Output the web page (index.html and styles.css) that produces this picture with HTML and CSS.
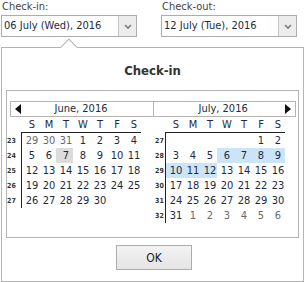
FILE: index.html
```html
<!DOCTYPE html>
<html lang="en">
<head>
    <meta charset="UTF-8">
    <title>Booking dates</title>
    <link rel="stylesheet" href="styles.css">
</head>
<body>
    <div class="fields">
        <div class="field">
            <div class="label">Check-in:</div>
            <div class="select">
                <span class="value">06 July (Wed), 2016</span>
                <span class="drop">
                    <svg width="8" height="5" viewBox="0 0 8 5"><path d="M1 1 L4 4 L7 1" fill="none" stroke="#7a7a7a" stroke-width="1.6"/></svg>
                </span>
            </div>
        </div>
        <div class="field">
            <div class="label">Check-out:</div>
            <div class="select">
                <span class="value">12 July (Tue), 2016</span>
                <span class="drop">
                    <svg width="8" height="5" viewBox="0 0 8 5"><path d="M1 1 L4 4 L7 1" fill="none" stroke="#7a7a7a" stroke-width="1.6"/></svg>
                </span>
            </div>
        </div>
    </div>

    <div class="popup">
        <span class="notch"></span>
        <div class="title">Check-in</div>

        <div class="cal-box">
            <div class="cal-head">
                <div class="head-half">
                    <svg class="arrow prev" width="6" height="10" viewBox="0 0 6 10"><path d="M6 0 L0 5 L6 10 Z" fill="#111"/></svg>
                    June, 2016
                </div>
                <div class="head-half">
                    July, 2016
                    <svg class="arrow next" width="6" height="10" viewBox="0 0 6 10"><path d="M0 0 L6 5 L0 10 Z" fill="#111"/></svg>
                </div>
            </div>
            <div class="months">
                <div class="month" id="june"></div>
                <div class="month next-month" id="july"></div>
            </div>
        </div>

        <div class="actions">
            <button class="ok-btn">OK</button>
        </div>
    </div>

    <script>
        // weeks of each month: [week number, days...]; 'p' = other month, 'h' = today, 's' = selected
        const june = [
            [23, ['29','p'], ['30','p'], ['31','p'], '1', '2', '3', '4'],
            [24, '5', '6', ['7','h'], '8', '9', '10', '11'],
            [25, '12', '13', '14', '15', '16', '17', '18'],
            [26, '19', '20', '21', '22', '23', '24', '25'],
            [27, '26', '27', '28', '29', '30', '', '']
        ];
        const july = [
            [27, '', '', '', '', '', '1', '2'],
            [28, '3', '4', '5', ['6','s'], ['7','s'], ['8','s'], ['9','s']],
            [29, ['10','s'], ['11','s'], ['12','s'], '13', '14', '15', '16'],
            [30, '17', '18', '19', '20', '21', '22', '23'],
            [31, '24', '25', '26', '27', '28', '29', '30'],
            [32, '31', ['1','p'], ['2','p'], ['3','p'], ['4','p'], ['5','p'], ['6','p']]
        ];

        function renderMonth(el, weeks) {
            const dow = document.createElement('div');
            dow.className = 'dow';
            ['S', 'M', 'T', 'W', 'T', 'F', 'S'].forEach(d => {
                const s = document.createElement('span');
                s.textContent = d;
                dow.appendChild(s);
            });
            el.appendChild(dow);

            const body = document.createElement('div');
            body.className = 'month-body';
            const wk = document.createElement('div');
            wk.className = 'weeks';
            const days = document.createElement('div');
            days.className = 'days';

            weeks.forEach(week => {
                const n = document.createElement('span');
                n.textContent = week[0];
                wk.appendChild(n);
                week.slice(1).forEach(d => {
                    const cell = document.createElement('span');
                    cell.className = 'day';
                    if (Array.isArray(d)) {
                        cell.textContent = d[0];
                        if (d[1] === 'p') cell.classList.add('other');
                        if (d[1] === 'h') cell.classList.add('today');
                        if (d[1] === 's') cell.classList.add('selected');
                    } else {
                        cell.textContent = d;
                    }
                    days.appendChild(cell);
                });
            });

            body.appendChild(wk);
            body.appendChild(days);
            el.appendChild(body);
        }

        renderMonth(document.getElementById('june'), june);
        renderMonth(document.getElementById('july'), july);
    </script>
</body>
</html>
```

FILE: styles.css
```css
body {
    margin: 0;
    background: #fff;
    font-family: 'DejaVu Sans Condensed', 'Liberation Sans', sans-serif;
    font-size: 11px;
    color: #222;
}
.fields {
    display: flex;
    gap: 24px;
    padding-left: 1px;
}
.field {
    width: 136px;
}
.label {
    height: 13px;
    line-height: 13px;
    margin-bottom: 2px;
    padding-left: 1px;
    color: #444;
}
.select {
    display: flex;
    height: 22px;
    box-sizing: border-box;
    border: 1px solid #acacac;
}
.value {
    flex-grow: 1;
    line-height: 20px;
    padding-left: 2px;
    color: #1e2a40;
    white-space: nowrap;
}
.drop {
    width: 17px;
    border-left: 1px solid #c8c8c8;
    background: #ececec;
    display: flex;
    align-items: center;
    justify-content: center;
}
.popup {
    position: relative;
    margin: 10px 0 0 1px;
    width: 303px;
    box-sizing: border-box;
    border: 1px solid #b4b4b4;
    padding: 0 4px 11px;
}
.notch {
    position: absolute;
    left: 61px;
    top: -7px;
    width: 12px;
    height: 12px;
    box-sizing: border-box;
    background: #fff;
    border-left: 1px solid #b4b4b4;
    border-top: 1px solid #b4b4b4;
    transform: rotate(45deg);
}
.title {
    padding-top: 14px;
    line-height: 17px;
    margin-bottom: 11px;
    text-align: center;
    font-weight: bold;
    font-size: 13px;
    color: #333;
}
.cal-box {
    border: 1px solid #b4b4b4;
    padding: 10px 0 14px;
}
.cal-head {
    display: flex;
    height: 16px;
    box-sizing: border-box;
    margin: 0 2px 0 3px;
    border: 1px solid #b4b4b4;
}
.head-half {
    flex: 1;
    display: flex;
    align-items: center;
    line-height: 14px;
    color: #1e2a40;
}
.head-half + .head-half {
    border-left: 1px solid #b4b4b4;
}
.head-half:first-child {
    justify-content: space-between;
    padding-right: 45px;
}
.head-half:last-child {
    justify-content: space-between;
    padding-left: 45px;
}
.head-half .prev {
    margin: 0 0 0 4px;
}
.head-half .next {
    margin: 0 4px 0 0;
}
.months {
    display: flex;
    gap: 10px;
}
.month {
    width: 134px;
}
.dow {
    display: flex;
    margin-left: 15px;
    height: 15px;
    line-height: 15px;
    color: #1e2a40;
}
.dow span {
    width: 17px;
    padding-left: 3px;
    box-sizing: border-box;
    text-align: center;
}
.month-body {
    display: flex;
}
.weeks {
    width: 14px;
    padding-top: 1px;
    display: flex;
    flex-direction: column;
}
.weeks span {
    height: 15px;
    line-height: 16px;
    font-size: 7px;
    font-weight: bold;
    color: #333;
}
.next-month .weeks span {
    padding-left: 4px;
}
.days {
    display: grid;
    grid-template-columns: repeat(7, 17px);
    grid-auto-rows: 15px;
    border-left: 1px solid #222;
    border-top: 1px solid #222;
    align-self: flex-start;
}
.day {
    line-height: 15px;
    padding-left: 3px;
    text-align: center;
    color: #1e2a40;
}
.day.other {
    color: #6a6a6a;
}
.day.today {
    background: #dcdcdc;
}
.day.selected {
    background: #cce4f7;
}
.actions {
    display: flex;
    justify-content: center;
    padding-top: 7px;
}
.ok-btn {
    width: 76px;
    height: 25px;
    margin-left: 3px;
    border: 1px solid #adadad;
    background: linear-gradient(#f2f2f2, #e5e5e5);
    font-family: 'DejaVu Sans Condensed', 'Liberation Sans', sans-serif;
    font-size: 12px;
    color: #222;
    padding: 0;
}
```
